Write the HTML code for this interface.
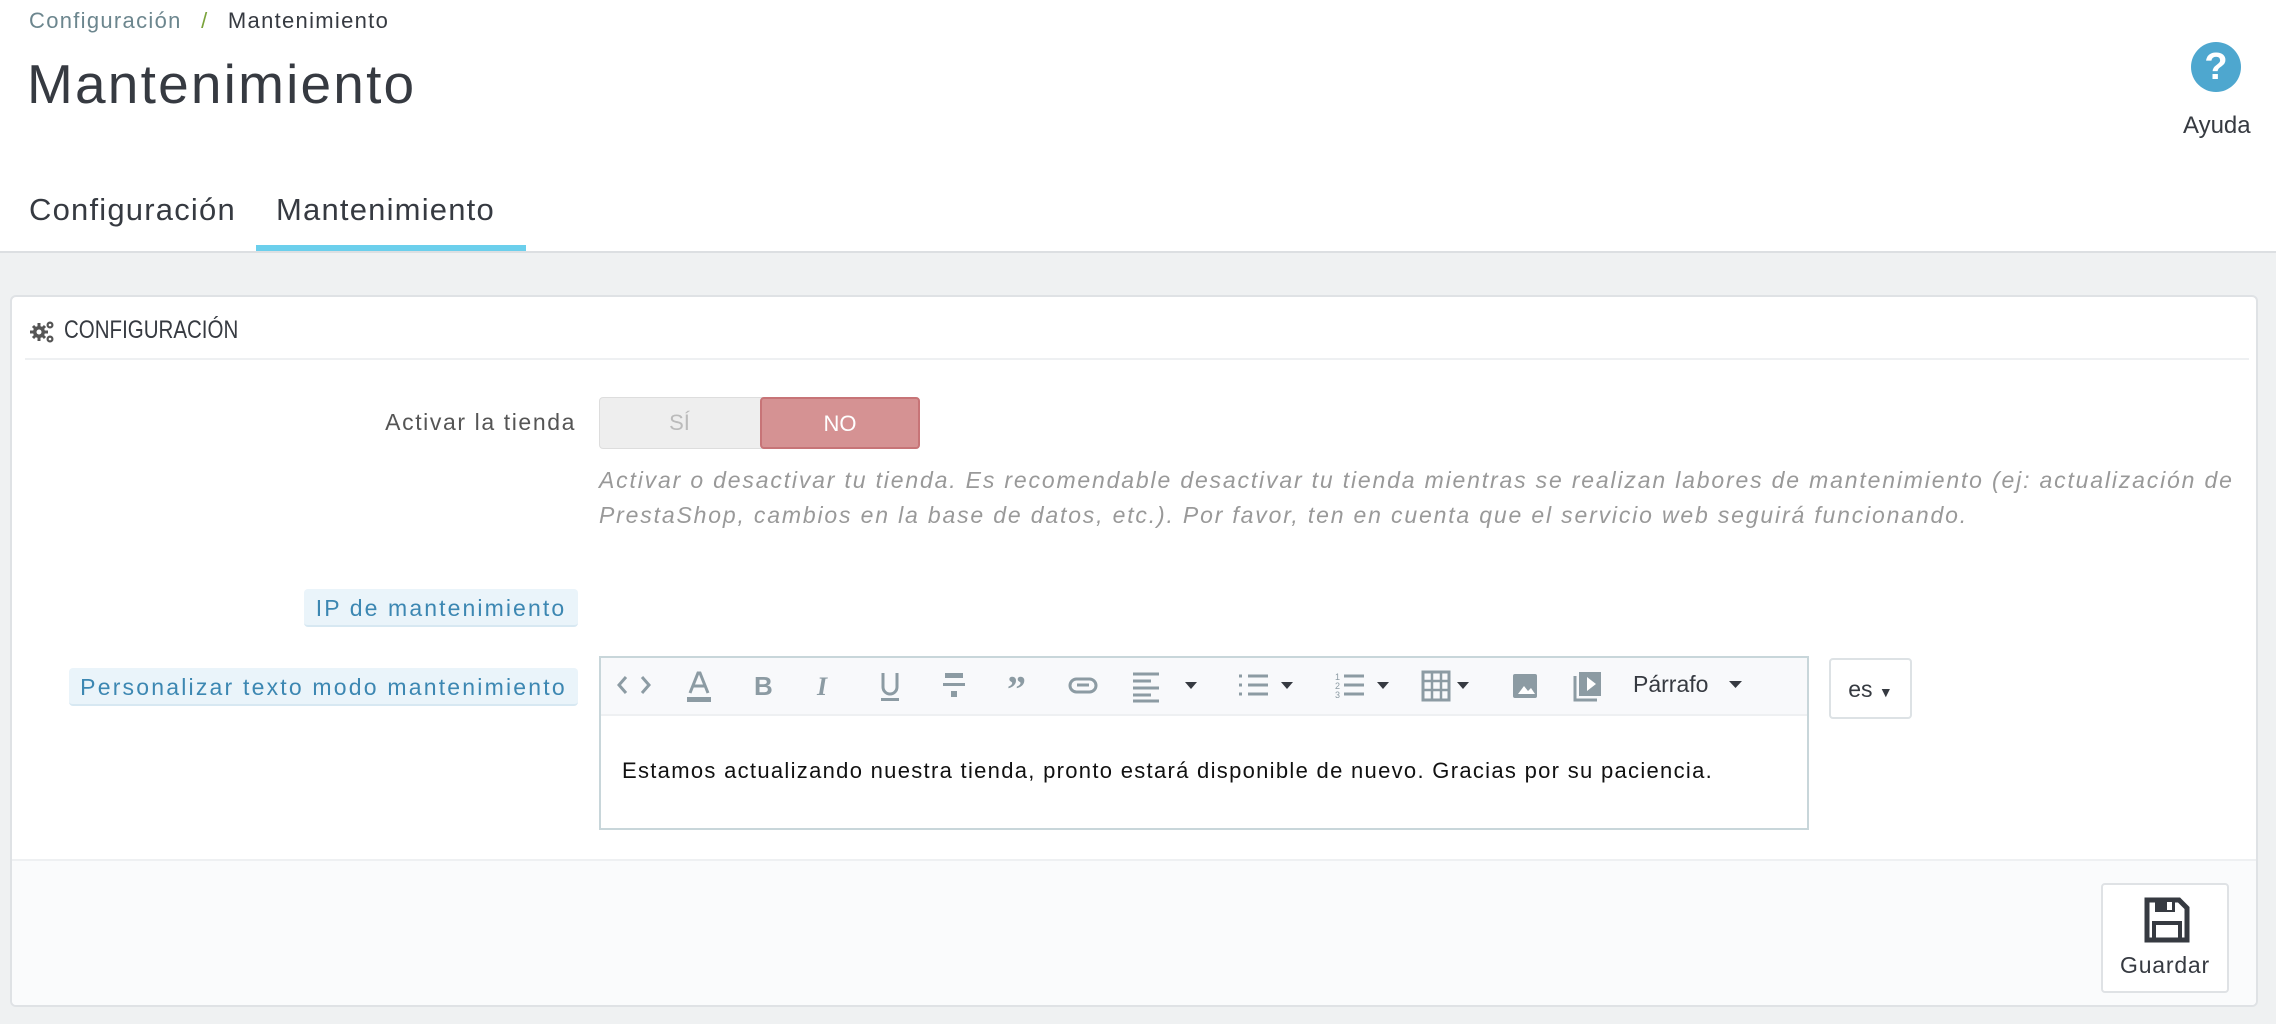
<!DOCTYPE html>
<html><head><meta charset="utf-8"><style>
*{margin:0;padding:0;box-sizing:border-box}
body{width:2276px;height:1024px;overflow:hidden;background:#eff1f2;font-family:"Liberation Sans",sans-serif;position:relative;color:#363a41}
.abs{position:absolute;white-space:nowrap}
#top{position:absolute;left:0;top:0;width:2276px;height:253px;background:#fff;border-bottom:2px solid #dcdfe2}
.ic{position:absolute;top:667px}
</style></head><body>
<div id="top">
 <div class="abs" style="left:29px;top:8px;font-size:22px;color:#6c868e;letter-spacing:1.3px">Configuración <span style="color:#7aa33b;margin:0 12px">/</span> <span style="color:#363a41">Mantenimiento</span></div>
 <div class="abs" style="left:27px;top:52px;font-size:55px;color:#363a41;letter-spacing:2.2px">Mantenimiento</div>
 <div style="position:absolute;left:2191px;top:42px;width:50px;height:50px;border-radius:50%;background:#4ea7cf;color:#fff;font-weight:bold;font-size:38px;text-align:center;line-height:50px">?</div>
 <div class="abs" style="left:2183px;top:112px;font-size:24px;color:#363a41">Ayuda</div>
 <div class="abs" style="left:29px;top:192px;font-size:31px;color:#363a41;letter-spacing:1.2px">Configuración</div>
 <div class="abs" style="left:276px;top:192px;font-size:31px;color:#363a41;letter-spacing:1.2px">Mantenimiento</div>
 <div style="position:absolute;left:256px;top:245px;width:270px;height:6px;background:#6bcfec"></div>
</div>
<div style="position:absolute;left:10px;top:295px;width:2248px;height:712px;background:#fff;border:2px solid #dfe2e5;border-radius:6px;overflow:hidden">
 <svg style="position:absolute;left:18px;top:22px" width="26" height="26" viewBox="0 0 26 26" fill="#555"><circle cx="9" cy="13" r="6"/><g stroke="#555" stroke-width="3"><path d="M9 4v18M0 13h18M3 7l12 12M15 7L3 19"/></g><circle cx="9" cy="13" r="2.5" fill="#fff"/><circle cx="20" cy="6" r="3.5"/><circle cx="20" cy="20" r="3.5"/><circle cx="20" cy="6" r="1.3" fill="#fff"/><circle cx="20" cy="20" r="1.3" fill="#fff"/></svg>
 <div class="abs" style="left:52px;top:19px;font-size:25px;color:#363a41;transform:scaleX(0.82);transform-origin:left">CONFIGURACIÓN</div>
 <div style="position:absolute;left:13px;top:61px;width:2224px;height:2px;background:#eef0f2"></div>
 <div class="abs" style="right:1680px;top:112px;font-size:23px;color:#555;letter-spacing:1.6px">Activar la tienda</div>
 <div style="position:absolute;left:587px;top:100px;width:321px;height:52px;border-radius:4px;background:#eee;border:1px solid #ddd"></div>
 <div class="abs" style="left:587px;top:100px;width:161px;height:52px;line-height:52px;text-align:center;font-size:22px;color:#bbb">SÍ</div>
 <div class="abs" style="left:748px;top:100px;width:160px;height:52px;line-height:50px;text-align:center;font-size:22px;color:#fff;background:#d59293;border:2px solid #c77477;border-radius:4px">NO</div>
 <div style="position:absolute;left:587px;top:166px;font-size:23px;line-height:35px;color:#999;font-style:italic;width:1700px;letter-spacing:1.83px;white-space:nowrap">Activar o desactivar tu tienda. Es recomendable desactivar tu tienda mientras se realizan labores de mantenimiento (ej: actualización de<br>PrestaShop, cambios en la base de datos, etc.). Por favor, ten en cuenta que el servicio web seguirá funcionando.</div>
 <div class="abs" style="left:292px;top:292px;width:274px;height:38px;line-height:38px;text-align:center;font-size:23px;color:#3c87b2;background:#eaf4fa;border-radius:4px;border-bottom:2px solid #d7e8f2;letter-spacing:2.1px">IP de mantenimiento</div>
 <div class="abs" style="left:57px;top:371px;width:509px;height:38px;line-height:38px;text-align:center;font-size:23px;color:#3c87b2;background:#eaf4fa;border-radius:4px;border-bottom:2px solid #d7e8f2;letter-spacing:2.2px">Personalizar texto modo mantenimiento</div>
 <div style="position:absolute;left:587px;top:359px;width:1210px;height:174px;border:2px solid #c8d6da">
  <div style="height:58px;background:#f8f9fb;border-bottom:2px solid #eef0f2"></div>
  <div class="abs" style="left:21px;top:100px;font-size:22px;color:#111;letter-spacing:1.3px">Estamos actualizando nuestra tienda, pronto estará disponible de nuevo. Gracias por su paciencia.</div>
 </div>
 <div class="abs" style="left:1817px;top:361px;width:83px;height:61px;border:2px solid #dde2e5;border-radius:4px;line-height:58px;text-align:center;font-size:23px;color:#363a41">es <span style="font-size:14px">▼</span></div>
 <div style="position:absolute;left:0;top:562px;width:2248px;height:150px;background:#fafbfc;border-top:2px solid #eef0f2"></div>
 <div style="position:absolute;left:2089px;top:586px;width:128px;height:110px;border:2px solid #dfe2e5;border-radius:4px;background:#fff"></div>
 <svg style="position:absolute;left:2132px;top:600px" width="46" height="46" viewBox="0 0 46 46"><path d="M3 3h32l8 8v32H3z" fill="none" stroke="#363a41" stroke-width="5"/><rect x="11" y="3" width="20" height="12" fill="#363a41"/><rect x="23" y="5" width="5" height="8" fill="#fff"/><rect x="10" y="26" width="26" height="17" fill="none" stroke="#363a41" stroke-width="4"/></svg>
 <div class="abs" style="left:2089px;top:655px;width:128px;text-align:center;font-size:23px;color:#363a41;letter-spacing:0.8px">Guardar</div>
</div>
<svg class="ic" style="left:617px" width="1140" height="36" viewBox="0 0 1140 36" fill="#8c9ba3" stroke="#8c9ba3">
 <path d="M9 10l-7 8 7 8M25 10l7 8-7 8" fill="none" stroke-width="3"/>
 <path d="M73 26l8-20h2l8 20M76 19h12" fill="none" stroke-width="3"/><rect x="70" y="30" width="24" height="5" stroke="none"/>
 <text x="137" y="28" font-size="26" font-weight="bold" stroke="none" font-family="Liberation Sans">B</text>
 <text x="200" y="28" font-size="26" font-weight="bold" font-style="italic" stroke="none" font-family="Liberation Serif">I</text>
 <path d="M266 6v14a7 7 0 0 0 14 0V6" fill="none" stroke-width="3"/><rect x="264" y="31" width="18" height="3" stroke="none"/>
 <rect x="326" y="16" width="22" height="3" stroke="none"/><rect x="328" y="6" width="18" height="5" stroke="none"/><rect x="334" y="24" width="6" height="6" stroke="none"/>
 <text x="390" y="35" font-size="38" font-weight="bold" stroke="none" font-family="Liberation Serif">”</text>
 <rect x="453" y="12" width="26" height="13" rx="6.5" fill="none" stroke-width="3"/><path d="M460 18h12" stroke-width="3"/>
 <path d="M516 7h26M516 14h18M516 21h26M516 28h18M516 34h26" stroke-width="3"/><path d="M568 15h12l-6 7z" stroke="none" fill="#363a41"/>
 <path d="M622 9h3M631 9h20M622 18h3M631 18h20M622 27h3M631 27h20" stroke-width="3"/><path d="M664 15h12l-6 7z" stroke="none" fill="#363a41"/>
 <path d="M727 9h20M727 18h20M727 27h20" stroke-width="3"/><text x="718" y="13" font-size="9" stroke="none">1</text><text x="718" y="22" font-size="9" stroke="none">2</text><text x="718" y="31" font-size="9" stroke="none">3</text><path d="M760 15h12l-6 7z" stroke="none" fill="#363a41"/>
 <rect x="806" y="5" width="26" height="28" fill="none" stroke-width="3"/><path d="M815 5v28M824 5v28M806 14h26M806 23h26" stroke-width="2.5"/><path d="M840 15h12l-6 7z" stroke="none" fill="#363a41"/>
 <rect x="896" y="7" width="24" height="24" rx="2" stroke="none"/><path d="M901 27l6-8 4 5 3-3 4 6z" fill="#fff" stroke="none"/>
 <rect x="962" y="5" width="22" height="24" stroke="none"/><path d="M970 10l9 7-9 7z" fill="#fff" stroke="none"/><path d="M958 9v24h22" fill="none" stroke-width="3"/>
 <text x="1016" y="25" font-size="23" fill="#363a41" stroke="none" font-family="Liberation Sans">Párrafo</text><path d="M1112 14h13l-6.5 7z" stroke="none" fill="#363a41"/>
</svg>
</body></html>
